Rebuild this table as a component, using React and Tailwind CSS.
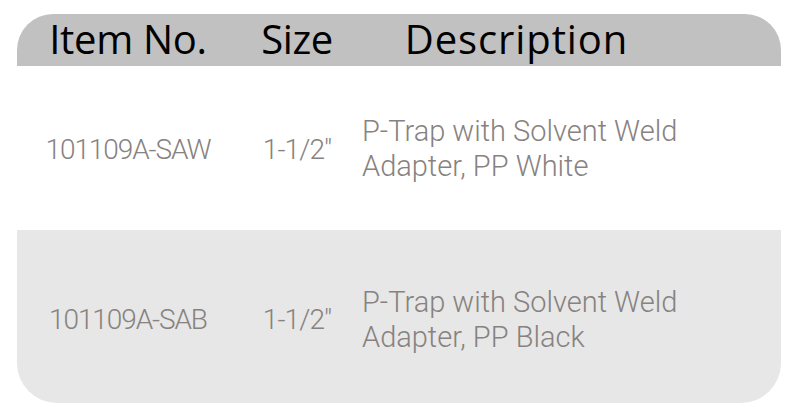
export default function App() {
  const body = { fontFamily: "Roboto, 'Liberation Sans', sans-serif" };
  const head = { fontFamily: "'Open Sans', 'Noto Sans', sans-serif" };
  return (
    <div className="w-[798px] h-[416px] bg-white pt-[14px] pl-[17px]">
      <div className="w-[764px]">
        <div className="flex h-[52px] items-center pb-[3px] bg-[#c0c1c0] rounded-t-[36px] text-black text-[40px] leading-none" style={head}>
          <div className="w-[222px] text-center tracking-[-0.3px]">Item No.</div>
          <div className="w-[116px] text-center tracking-[-0.4px]">Size</div>
          <div className="w-[323px] text-center tracking-[0.9px]">Description</div>
        </div>
        <div className="flex h-[164px] items-center pt-[2px] text-[#878280] font-light leading-[35px]" style={body}>
          <div className="w-[222px] text-center text-[28px] tracking-[-1.1px]">101109A-SAW</div>
          <div className="w-[116px] text-center text-[28px] tracking-[-0.9px]">1-1/2"</div>
          <div className="w-[328px] pl-[7px] text-[29px] tracking-[0px]">
            <div>P-Trap with Solvent Weld</div>
            <div>Adapter, PP White</div>
          </div>
        </div>
        <div className="flex h-[173px] items-center pt-[6px] bg-[#e6e7e6] rounded-b-[40px] text-[#878280] font-light leading-[35px]" style={body}>
          <div className="w-[222px] text-center text-[28px] tracking-[-1.1px]">101109A-SAB</div>
          <div className="w-[116px] text-center text-[28px] tracking-[-0.9px]">1-1/2"</div>
          <div className="w-[328px] pl-[7px] text-[29px] tracking-[0px]">
            <div>P-Trap with Solvent Weld</div>
            <div>Adapter, PP Black</div>
          </div>
        </div>
      </div>
    </div>
  );
}
